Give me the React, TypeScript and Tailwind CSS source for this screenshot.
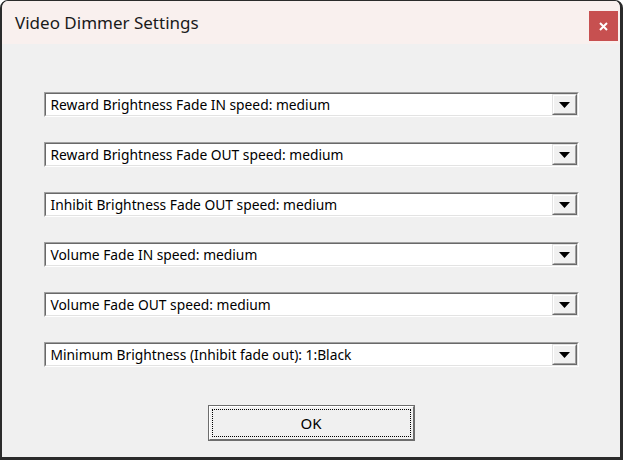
import React from "react";

const settings = [
  "Reward Brightness Fade IN speed: medium",
  "Reward Brightness Fade OUT speed: medium",
  "Inhibit Brightness Fade OUT speed: medium",
  "Volume Fade IN speed: medium",
  "Volume Fade OUT speed: medium",
  "Minimum Brightness (Inhibit fade out): 1:Black",
];

const font = { fontFamily: '"Noto Sans", "Open Sans", sans-serif' };

const ComboBox: React.FC<{ label: string }> = ({ label }) => (
  <div className="h-[25px] w-[535px] border border-t-[#a0a0a0] border-l-[#a0a0a0] border-r-white border-b-white">
    <div className="flex h-full w-full border border-t-[#696969] border-l-[#696969] border-r-[#e3e3e3] border-b-[#e3e3e3] bg-white">
      <div className="flex flex-1 items-center pl-[5px] pt-[2px] text-[13.8px] text-black">{label}</div>
      <div className="h-full w-[25px] border border-t-[#e3e3e3] border-l-[#e3e3e3] border-r-[#696969] border-b-[#696969]">
        <div className="flex h-full w-full items-center justify-center border border-t-white border-l-white border-r-[#a0a0a0] border-b-[#a0a0a0] bg-[#f0f0f0]">
          <svg width="11" height="6" viewBox="0 0 11 6">
            <path d="M0 0h11L5.5 6z" fill="#000" />
          </svg>
        </div>
      </div>
    </div>
  </div>
);

export default function App() {
  return (
    <div
      className="flex h-[460px] w-[623px] flex-col overflow-hidden rounded-t-lg border-t border-l-2 border-r-[3px] border-b-[3px] border-[#2b2b2b] bg-[#f0f0f0]"
      style={font}
    >
      <div className="flex h-[43px] shrink-0 items-start justify-between bg-[#f9f0ee]">
        <div className="pl-[13px] pt-[9px] text-[17px] text-[#1a1a1a]">Video Dimmer Settings</div>
        <button className="mr-[2px] mt-[10px] flex h-[30px] w-[29px] items-center justify-center bg-[#c75050] text-white">
          <svg width="9" height="9" viewBox="0 0 9 9">
            <path d="M1 1l7 7M8 1L1 8" stroke="#fff" strokeWidth="2" />
          </svg>
        </button>
      </div>
      <div className="flex flex-col items-center pt-[48px]">
        <div className="flex flex-col gap-[25px]">
          {settings.map((s) => (
            <ComboBox key={s} label={s} />
          ))}
        </div>
        <button className="mt-[38px] h-[36px] w-[207px] border border-[#6d6d6d]">
          <div className="h-full w-full border border-t-white border-l-white border-r-[#6d6d6d] border-b-[#6d6d6d] bg-[#f0f0f0] p-[2px]">
            <div className="flex h-full w-full items-center justify-center border border-dotted border-black text-[15px] text-black">
              OK
            </div>
          </div>
        </button>
      </div>
    </div>
  );
}
